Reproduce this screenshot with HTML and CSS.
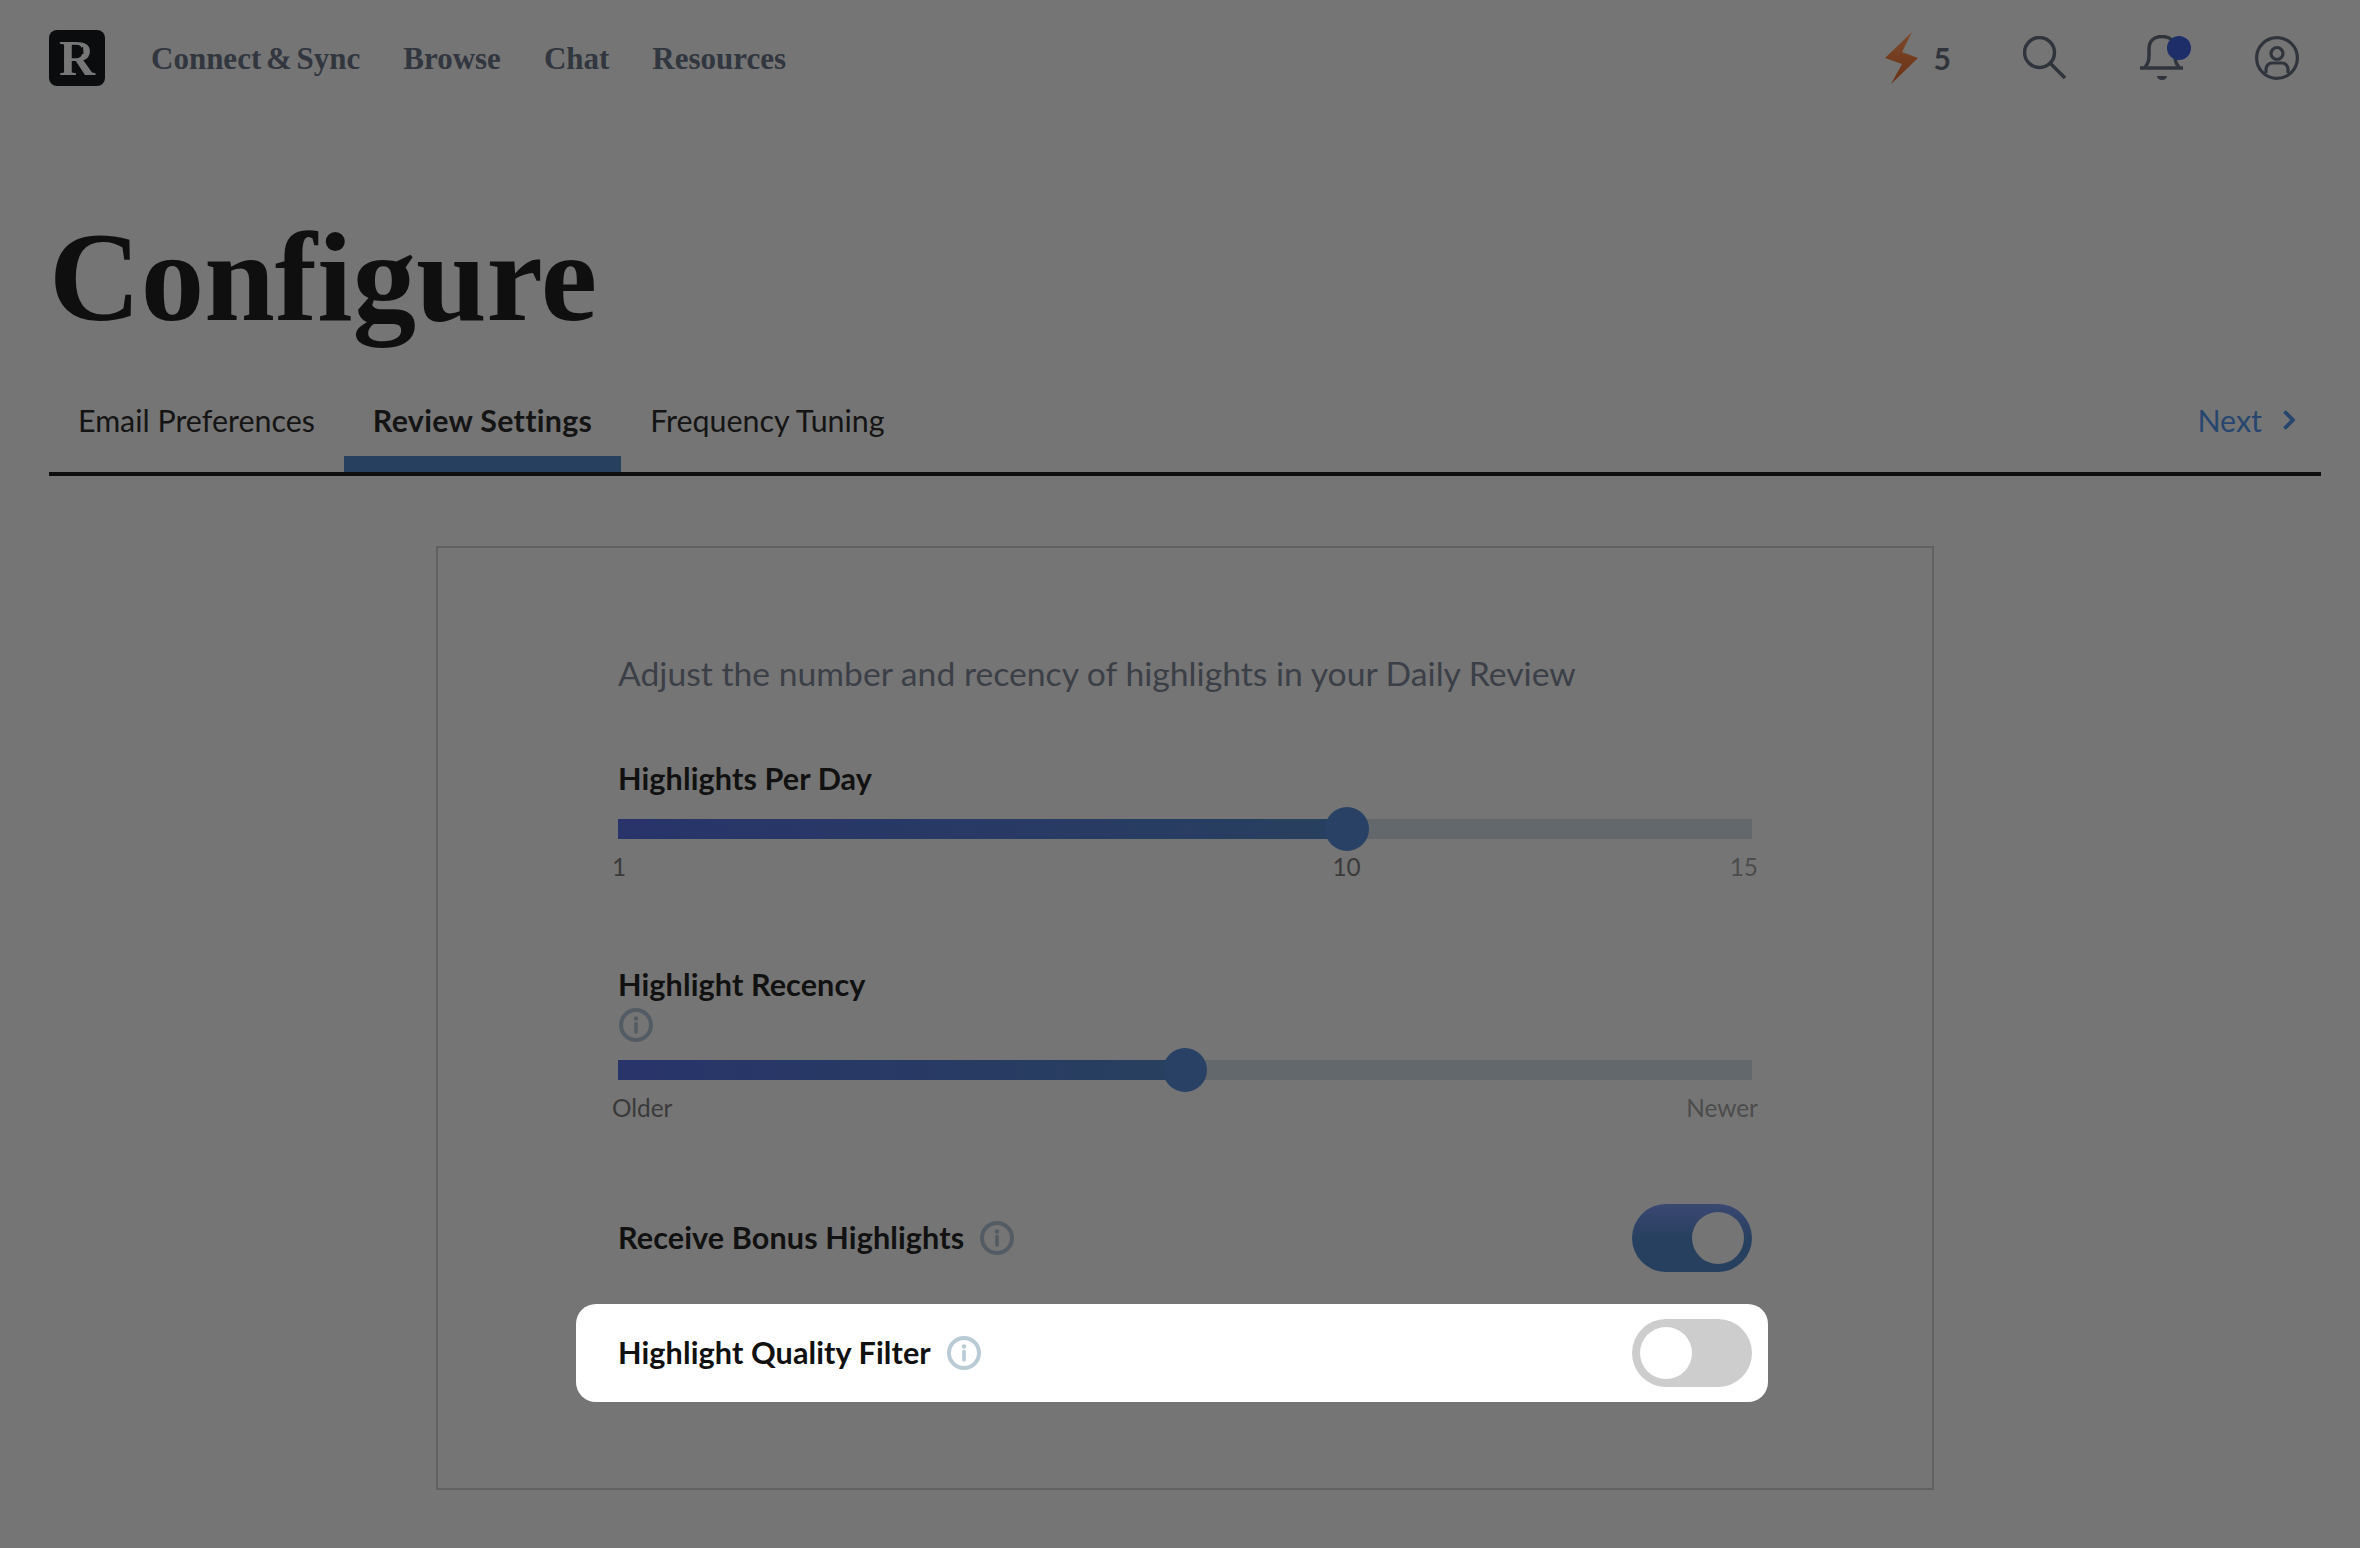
FILE: index.html
```html
<!DOCTYPE html>
<html lang="en">
<head>
    <meta charset="UTF-8">
    <title>Configure</title>
    <link rel="stylesheet" href="styles.css">
</head>
<body>
    <header>
        <div class="logo">R
            <svg class="logo-notch" viewBox="0 0 56 56"><polygon points="26,23.5 34,16.5 34.5,24" fill="#0b0c0d"/></svg>
        </div>
        <nav class="nav-bar">
            <a class="tight" href="#">Connect &amp; Sync</a>
            <a href="#">Browse</a>
            <a href="#">Chat</a>
            <a href="#">Resources</a>
        </nav>
        <div class="header-icons">
            <div class="streak">
                <svg class="bolt" viewBox="0 0 33 52"><defs><linearGradient id="boltFill" x1="0" y1="0" x2="0" y2="1"><stop offset="0" stop-color="#7d4a2a"/><stop offset="1" stop-color="#6b3014"/></linearGradient></defs><polygon points="27,0 0,26 17,32 6,52 33,26 17,20" fill="url(#boltFill)"/></svg>
                <span class="streak-count">5</span>
            </div>
            <svg class="icon search" viewBox="0 0 44 44" fill="none" stroke="#30353d" stroke-width="3.5"><circle cx="16.5" cy="16.5" r="15"/><line x1="27" y1="27" x2="42" y2="42"/></svg>
            <div class="bell-wrap">
                <svg class="icon bell" viewBox="0 0 44 46" fill="none" stroke="#30353d" stroke-width="3.5"><path d="M5 32C8 29 9 26 9 21V14C9 6 14 1.5 22 1.5S35 6 35 14V21C35 26 36 29 39 32"/><line x1="0" y1="33" x2="43" y2="33"/><path d="M17 41h10c0 2-2 4-5 4s-5-2-5-4z" fill="#30353d" stroke="none"/></svg>
                <span class="bell-dot"></span>
            </div>
            <svg class="icon user" viewBox="0 0 44 44" fill="none" stroke="#30353d" stroke-width="3.2"><circle cx="22" cy="22" r="20.4"/><circle cx="22" cy="17.5" r="6"/><path d="M11 37V33a6 6 0 0 1 6-6h10a6 6 0 0 1 6 6v4"/></svg>
        </div>
    </header>

    <h1>Configure</h1>

    <div class="tabs">
        <a class="tab" href="#">Email Preferences</a>
        <a class="tab active" href="#">Review Settings</a>
        <a class="tab" href="#">Frequency Tuning</a>
        <a class="next" href="#">Next
            <svg viewBox="0 0 12 20" fill="none" stroke="#27466f" stroke-width="3.8"><path d="M1.5 1.5L10 10l-8.5 8.500"/></svg>
        </a>
    </div>

    <div class="card">
        <p class="description">Adjust the number and recency of highlights in your Daily Review</p>

        <!-- Highlights per day -->
        <div class="setting first">
            <div class="label">Highlights Per Day</div>
            <div class="slider">
                <div class="slider-fill" style="width: 64.3%"></div>
                <div class="slider-thumb" style="left: 64.3%"></div>
            </div>
            <div class="ticks">
                <span>1</span>
                <span class="tick-mid" style="left: 64.1%">10</span>
                <span class="tick-end">15</span>
            </div>
        </div>

        <!-- Recency -->
        <div class="setting">
            <div class="label">Highlight Recency</div>
            <svg class="info stacked" viewBox="0 0 34 34" fill="none" stroke="#535c64"><circle cx="17" cy="17" r="15" stroke-width="4"/><circle cx="17" cy="10.5" r="2.2" fill="#535c64" stroke="none"/><line x1="17" y1="15.5" x2="17" y2="24" stroke-width="3.6" stroke-linecap="round"/></svg>
            <div class="slider">
                <div class="slider-fill" style="width: 50%"></div>
                <div class="slider-thumb" style="left: 50%"></div>
            </div>
            <div class="ticks">
                <span>Older</span>
                <span class="tick-end">Newer</span>
            </div>
        </div>

        <!-- Toggles -->
        <div class="toggle-row bonus">
            <span class="label">Receive Bonus Highlights</span>
            <svg class="info" viewBox="0 0 34 34" fill="none" stroke="#535c64"><circle cx="17" cy="17" r="15" stroke-width="4"/><circle cx="17" cy="10.5" r="2.2" fill="#535c64" stroke="none"/><line x1="17" y1="15.5" x2="17" y2="24" stroke-width="3.6" stroke-linecap="round"/></svg>
            <div class="toggle on"><span class="knob"></span></div>
        </div>

        <div class="toggle-row highlighted">
            <span class="label">Highlight Quality Filter</span>
            <svg class="info" viewBox="0 0 34 34" fill="none" stroke="#b9cbd5"><circle cx="17" cy="17" r="15" stroke-width="4"/><circle cx="17" cy="10.5" r="2.2" fill="#b9cbd5" stroke="none"/><line x1="17" y1="15.5" x2="17" y2="24" stroke-width="3.6" stroke-linecap="round"/></svg>
            <div class="toggle"><span class="knob"></span></div>
        </div>
    </div>
</body>
</html>
```

FILE: styles.css
```css
/* General Styles */
body {
    margin: 0;
    padding: 0 39px 0 49px;
    height: 1548px;
    box-sizing: border-box;
    overflow: hidden;
    background-color: #757575;
    font-family: "Lato", "Open Sans", sans-serif;
    color: #141414;
}

a {
    text-decoration: none;
}

/* Header */
header {
    display: flex;
    align-items: center;
    padding: 30px 22px 0 0;
}

.logo {
    position: relative;
    width: 56px;
    height: 56px;
    border-radius: 8px;
    background-color: #0b0c0d;
    color: #777;
    font-family: "Liberation Serif", serif;
    font-weight: bold;
    font-size: 50px;
    line-height: 57px;
    text-align: center;
}

.logo-notch {
    position: absolute;
    top: 0;
    left: 0;
    width: 56px;
    height: 56px;
}

.nav-bar {
    display: flex;
    gap: 43px;
    margin-left: 46px;
    padding-top: 2px;
}

.nav-bar a {
    font-family: "Liberation Serif", serif;
    font-weight: bold;
    font-size: 31px;
    line-height: 40px;
    color: #31363f;
}

.nav-bar a.tight {
    word-spacing: -3px;
}

.header-icons {
    display: flex;
    align-items: center;
    margin-left: auto;
}

.streak {
    display: flex;
    align-items: center;
    gap: 16px;
}

.bolt {
    width: 33px;
    height: 52px;
}

.streak-count {
    font-size: 30px;
    font-weight: 700;
    line-height: 40px;
    color: #30353d;
}

.icon {
    display: block;
    width: 44px;
    height: 44px;
}

.search {
    margin-left: 72px;
}

.bell-wrap {
    position: relative;
    height: 46px;
    margin-left: 73px;
}

.icon.bell {
    height: 46px;
}

.user {
    margin-left: 71px;
}

.bell-dot {
    position: absolute;
    top: 1px;
    left: 27px;
    width: 24px;
    height: 24px;
    border-radius: 50%;
    background-color: #1d2e68;
}

/* Title */
h1 {
    margin: 121px 0 0;
    font-family: "Liberation Serif", serif;
    font-weight: bold;
    font-size: 127px;
    line-height: 140px;
    color: #0f0f0f;
}

/* Tabs */
.tabs {
    display: flex;
    align-items: flex-end;
    height: 92px;
    margin-top: 33px;
    border-bottom: 4px solid #0f0f0f;
}

.tab {
    padding: 0 29px 16px;
    line-height: 40px;
    font-size: 30.4px;
    color: #141414;
    border-bottom: 16px solid transparent;
}

.tab.active {
    font-weight: 700;
    letter-spacing: 0.3px;
    border-bottom-color: #28405f;
}

.next {
    display: flex;
    align-items: center;
    gap: 21px;
    margin-left: auto;
    margin-right: 26px;
    padding-bottom: 32px;
    line-height: 40px;
    font-size: 30.4px;
    color: #27466f;
}

.next svg {
    width: 12px;
    height: 20px;
}

/* Card */
.card {
    width: 1498px;
    height: 944px;
    box-sizing: border-box;
    margin: 70px auto 0;
    padding: 103px 180px 0;
    border: 2px solid #616161;
}

.description {
    margin: 0;
    font-size: 33.7px;
    line-height: 44px;
    color: #3b3f47;
}

.setting {
    margin-top: 83px;
}

.setting.first {
    margin-top: 64px;
}

.label {
    font-size: 30.6px;
    font-weight: 700;
    letter-spacing: 0.1px;
    line-height: 40px;
    color: #111;
}

.info {
    display: block;
    flex: none;
    width: 34px;
    height: 34px;
}

.info.stacked {
    margin: 3px 0 18px 1px;
}

.setting.first .label {
    margin-bottom: 20px;
}

/* Sliders */
.slider {
    position: relative;
    height: 20px;
    background-color: #63686d;
}

.slider-fill {
    height: 100%;
    background: linear-gradient(90deg, #28346a, #28405f);
}

.slider-thumb {
    position: absolute;
    top: -12px;
    width: 44px;
    height: 44px;
    margin-left: -22px;
    border-radius: 50%;
    background-color: #2a4166;
}

.ticks {
    position: relative;
    display: flex;
    justify-content: space-between;
    margin: 13px -6px 0;
    font-size: 24.4px;
    line-height: 30px;
    color: #3a3a3a;
}

.tick-mid {
    position: absolute;
    transform: translateX(-50%);
}

.tick-end {
    color: #4c4c4c;
}

/* Toggle rows */
.toggle-row {
    display: flex;
    align-items: center;
    gap: 16px;
}

.toggle-row.bonus {
    margin-top: 81px;
}

.toggle-row.highlighted {
    margin: 32px -16px 0 -42px;
    padding: 15px 16px 15px 42px;
    border-radius: 20px;
    background-color: #fff;
}

.toggle {
    display: flex;
    width: 120px;
    height: 68px;
    box-sizing: border-box;
    margin-left: auto;
    padding: 8px;
    border-radius: 34px;
    background-color: #cdcdcd;
}

.toggle.on {
    justify-content: flex-end;
    background: linear-gradient(180deg, #3a4772, #28405f 50%);
}

.knob {
    width: 52px;
    height: 52px;
    border-radius: 50%;
    background-color: #fff;
}

.toggle.on .knob {
    background-color: #757575;
}
```
